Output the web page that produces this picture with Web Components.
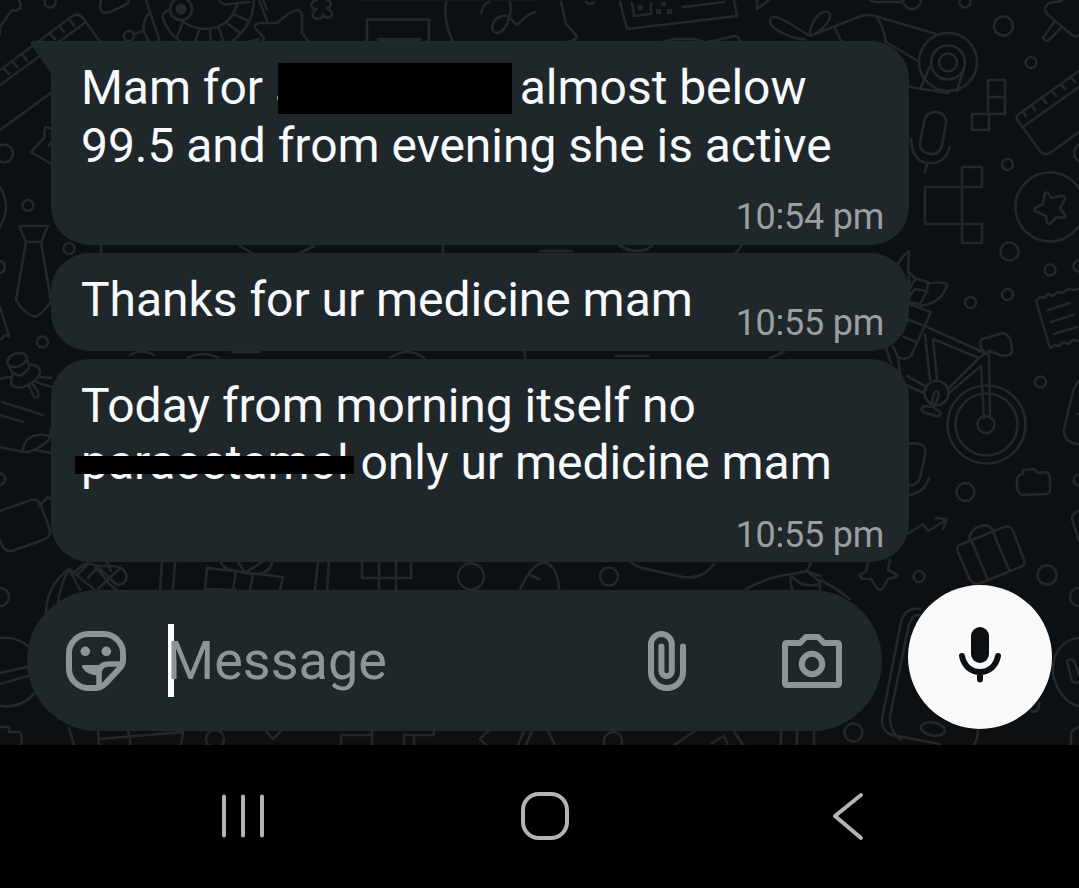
<!DOCTYPE html>
<html lang="en">
<head>
<meta charset="utf-8">
<title>Chat</title>
<style>
	body {
		margin: 0;
		background: #000;
		font-family: Roboto, "Liberation Sans", sans-serif;
	}
</style>
</head>
<body>
<chat-screen>
	<chat-bubble tail time="10:54 pm">Mam for <redacted-block></redacted-block> almost below<br>99.5 and from evening she is active</chat-bubble>
	<chat-bubble compact time="10:55 pm">Thanks for ur medicine mam</chat-bubble>
	<chat-bubble time="10:55 pm">Today from morning itself no<br><struck-word>paracetamol</struck-word> only ur medicine mam</chat-bubble>
	<message-composer slot="composer" placeholder="Message"></message-composer>
	<system-nav slot="nav"></system-nav>
</chat-screen>

<script>
/** Doodle pattern drawn behind the conversation. */
class ChatWallpaper extends HTMLElement {
	constructor() {
		super();
		this.attachShadow({ mode: "open" }).innerHTML = `
			<style>
				:host {
					display: block;
					background: #0b1014;
				}

				svg {
					display: block;
					fill: none;
					stroke: #22282c;
					stroke-width: 2.6;
					stroke-linecap: round;
					stroke-linejoin: round;
				}

				.solid {
					fill: #22282c;
					stroke: none;
				}
			</style>
			<svg width="1079" height="745" viewBox="0 0 1079 745" aria-hidden="true">
				<!-- top edge, left half -->
				<path d="M0 34V27L12 10Q19 12 21 6L19 0"/>
				<circle cx="50" cy="2" r="5.5"/>
				<path d="M101 0L100 8Q102 15 110 12L125 5Q129 3 129 0"/>
				<path d="M0 70L71 17Q78 12 83 18L100 42M0 85L86 22M0 130L52 92M4 69l5 5M13 62l4 5M23 55l4 6M50 34l5 5M60 27l4 5M70 20l4 6"/>
				<circle cx="129" cy="36" r="5"/>
				<path d="M134 34L143 31M150 12Q137 27 150 42M146 0L160 42"/>
				<circle cx="181" cy="9" r="11"/>
				<circle class="solid" cx="181" cy="9" r="5.5"/>
				<path d="M169 10Q161 13 163 19Q168 33 181 42M182 21Q193 29 207 29Q230 27 237 5M219 0Q223 6 230 4L250 2M254 0Q253 27 231 42M183 22L177 37M199 30L195 42M210 30L211 42M219 28L223 40M227 23L240 33M233 14L249 21"/>
				<path d="M259 0L268 23M263 0L267 10M262 41L264 38L255 28Q254 23 261 23H277L288 14Q300 6 302 15V33L309 42M248 42L259 39"/>
				<path d="M313 2C308 6 314 10 317 9C311 12 311 19 319 19C322 19 323 15 323 14C325 19 332 19 332 14C332 10 327 9 327 8C333 6 331 0 326 0M317 0Q313 0 313 2"/>
				<path d="M367 42V19.500H429V42"/>
				<path class="solid" d="M376 38H421V42H379Z"/>
				<path d="M446 2Q443 21 453 42M481 13Q483 4 489 2M510 2C513 17 505 31 498 33C489 33 491 19 502 16C512 14 513 24 517 25C520 22 527 14 535 12"/>
				<!-- top edge, right half -->
				<path d="M360 0H540" stroke-width="1" opacity=".6"/>
				<path d="M561 2L566 24L577 36Q577 41 566 42M586 2Q590 6 594 2"/>
				<path d="M620 2L627 29L737 16L734 0M632 3L634 16L651 14V3M683 7L724 2"/>
				<path class="solid" d="M638 5h5v5h-5zM656 9h5v5h-5zM661 2h5v4h-5zM667 9h5v5h-5z"/>
				<path d="M708 42L735 36Q739 36 740 42M757 0V9L769 0M662 42L674 39H695L703 42"/>
				<path d="M805 39C793 40 768 28 770 20C773 10 794 27 810 36C809 24 820 9 828 12C836 17 820 33 810 36L861 16Q866 14 875 16L936 34M835 28L842 43M875 16Q882 21 886 42L918 61M909 87L948 93"/>
				<path d="M870 0Q874 3 880 2H902"/>
				<circle cx="912" cy="0" r="9"/>
				<circle cx="965" cy="2" r="5.500"/>
				<circle cx="1003.500" cy="26" r="9.500"/>
				<circle cx="1031" cy="62.500" r="5.500"/>
				<path d="M1062 1L1050 3Q1042 7 1047 14L1072 35Q1076 38 1079 35M1054 22L1043 38Q1045 43 1050 39L1061 28"/>
				<circle cx="948" cy="62" r="29"/>
				<circle cx="948" cy="62.500" r="17"/>
				<circle cx="948" cy="62.500" r="9"/>
				<path d="M930 66L921 87M964 68L957 91"/>
				<!-- microphone, blocks and ruler -->
				<path d="M924 122Q926 112 935 112Q947 113 946 124L942 145Q940 155 930 154Q919 152 920 143ZM911 139C912 154 918 163 929 163Q945 164 950 147M927 164L925 172"/>
				<path d="M988 80H1005V114H988ZM988 97H1005M972 114H989V130H972ZM962 167H982V187H962ZM925 187H962V224H925ZM962 187V224M962 224H982V243H962Z"/>
				<path d="M1079 71L1019 114Q1015 117 1018 121L1040 151Q1044 156 1050 153L1079 132M1024 126L1079 87M1022 111l4 5M1031 105l4 5M1042 97l4 6M1052 91l4 5M1061 84l4 5M1071 77l4 5"/>
				<circle cx="1083" cy="153" r="9"/>
				<circle cx="1007.500" cy="164.500" r="5.500"/>
				<circle cx="1050" cy="207" r="34.500"/>
				<path d="M1045 193Q1048 191 1051 198L1061 196Q1067 196 1064 201L1060 208L1065 215Q1067 219 1057 217L1050 224Q1047 226 1046 216L1035 211Q1032 209 1043 204Z"/>
				<circle cx="1009.500" cy="251.500" r="9"/>
				<circle cx="1050" cy="270" r="5.500"/>
				<circle cx="1079" cy="266" r="5.500"/>
				<circle cx="1007.500" cy="294.500" r="5.500"/>
				<circle cx="970.500" cy="302.500" r="5.500"/>
				<path d="M1036 301l4-4 4 1 4-4 5 2 5-4 5 1 5-4 6 1 4-1M1036 301L1050 348l5-3 4 1 4-4 5 2 5-4 6 1M1048 310L1070 303M1051 322L1073 315M1054 334L1077 327"/>
				<!-- flowers and bicycle -->
				<path d="M898 264Q904 254 909 251L908 272M909 272L916 279L928 282L927 291L920 304L909 302V272M927 284Q938 281 947 284Q943 303 920 306M915 279L909 290M927 291L915 289L909 297M909 304L931 312L911 356Q905 361 898 357L893 346M909 320L925 326M904 337L916 342M886 348L891 363M898 357L900 374"/>
				<path d="M925 326L989 355Q981 352 980 343Q980 339 986 338L1003 333Q1012 335 1012 352Q1010 357 1000 355L989 351L979 358M933 339L979 358L948 389M925 334L930 380M933 339L937 380M907 376L925 386M906 385L924 393M989 355L990 418M981 366L984 418M981 366L949 393"/>
				<circle cx="936.500" cy="393" r="12"/>
				<path d="M934 393Q939 389 939 395L934 408L940 412Q942 417 936 416L923 412Q919 408 925 406L931 407Z"/>
				<circle cx="986.500" cy="424.500" r="39"/>
				<circle cx="986.500" cy="424.500" r="31"/>
				<circle cx="986" cy="424.500" r="8.500"/>
				<circle cx="1040.500" cy="382" r="5.500"/>
				<path d="M1079 381Q1076 383 1073 392L1064 429Q1063 443 1079 444M1077 414h2"/>
				<path d="M907 444Q928 440 925 456L920 478Q917 486 906 486M929 478Q924 494 906 495"/>
				<path d="M1017 480Q1018 474 1023 474V470L1035 469L1037 473L1046 472Q1050 473 1050 480V490Q1050 494 1045 494L1023 495Q1018 494 1017 488Z"/>
				<circle cx="965.500" cy="492" r="9"/>
				<circle cx="1079" cy="480" r="5.500"/>
				<!-- suitcase, arrow, star, phone -->
				<path d="M909 533L923 524L928 531L946 520M936 518L947 519L943 529"/>
				<path d="M958 552Q955 546 962 544L1004 527Q1010 525 1013 531L1024 560Q1026 565 1020 567L981 583Q973 586 969 578ZM969 540C969 526 991 519 994 533M972 542L987 578M993 532L1009 570"/>
				<circle cx="1047" cy="575" r="9.500"/>
				<circle cx="919" cy="576.500" r="5.500"/>
				<circle cx="1079" cy="597" r="9"/>
				<path d="M1079 511Q1070 513 1073 522L1079 541M868 562L866 571L860 575Q860 579 865 579H871L877 588Q881 593 884 586L888 579Q900 577 896 574L888 570L890 559"/>
				<path d="M920 609Q905 607 901 622L882 719Q881 731 892 735L940 744M920 615Q911 614 908 629L890 716Q889 731 901 740M974 744Q978 739 978 729"/>
				<ellipse cx="933" cy="729" rx="12" ry="6.500" transform="rotate(10 933 729)"/>
				<path d="M1079 638C1058 640 1047 663 1056 684Q1064 703 1079 706M1067 661Q1072 657 1075 663L1079 675M1067 661L1072 681Q1074 684 1079 682M1031 711Q1039 714 1039 703M1071 745V735Q1071 729 1079 727"/>
				<circle cx="853.500" cy="732.500" r="9"/>
				<!-- left edge -->
				<circle cx="4" cy="153.500" r="9"/>
				<path d="M53 129L45 127L44 138L31 152L53 165M49 145L53 141M0 187Q12 206 0 227"/>
				<circle cx="28" cy="205.500" r="5.500"/>
				<circle cx="-1" cy="267" r="6"/>
				<path d="M19 226H48L41 242H26ZM26 242L16 300Q23 313 35 317Q45 312 51 301L41 242M0 307L9 336Q3 334 2 339H0"/>
				<circle cx="69" cy="248.500" r="5.500"/>
				<circle cx="42.500" cy="342" r="5.500"/>
				<ellipse cx="17" cy="360" rx="10" ry="6.500" transform="rotate(-20 17 360)"/>
				<path d="M8 364L13 374Q9 382 13 386Q21 391 34 381Q43 374 38 367Q35 364 29 365L26 357M14 373Q20 380 29 368M28 384L34 397Q40 399 38 392L32 383M0 379Q5 377 11 377M36 382L52 387M39 377L52 378M2 402L43 415M0 415L23 422M0 447L23 452Q34 453 49 440L52 427M23 452C23 438 34 432 49 436M35 450L52 453"/>
				<circle cx="-1" cy="479" r="6"/>
				<path d="M0 511L31 500Q38 498 41 506L50 530Q51 537 43 540L12 551Q5 552 2 545L0 540M39 506L48 497L52 500"/>
				<circle cx="0" cy="597" r="9"/>
				<path d="M0 638Q17 636 29 647M0 706Q20 709 34 694M0 673L27 667M0 684L31 675M0 727H9V732H19Q23 735 21 745"/>
				<!-- strip above the composer -->
				<path d="M46 612Q47 585 69 569L80 590M69 569Q60 586 58 602M69 569L94 589M73 574Q87 558 95 566L110 585L117 590M88 578L99 566H115C132 569 128 588 116 584L96 565M88 564L78 574M98 589L120 568M107 562L111 571M162 562L160 590M175 562L173 590M207 568L283 577L280 590M207 568L205 590M206 589L236 590M236 572L233 590M253 574L250 590M221 562Q223 570 238 571L245 573L262 562M238 562L245 573Q270 577 272 562M318 562L315 590M329 562L327 590M362 562V578H411V562M379 562V590M396 562V590M520 590Q532 561 546 563Q558 567 559 590M530 575L539 579"/>
				<circle cx="471" cy="576.500" r="13"/>
				<circle cx="609" cy="576.500" r="9"/>
				<path d="M631 562Q637 568 651 570L683 577Q702 580 714 564M746 589Q770 576 792 574L807 571L820 582V590M792 577Q804 589 820 584M790 578L792 590M807 571L811 562M820 580Q833 586 850 599M807 571L820 576"/>
				<!-- strips between the bubbles -->
				<path d="M101 245V253M240 246l12 7M300 253l14-7M443 245v8M540 251h32M620 246q18 10 32 0M742 245l-6 8M130 355q12-7 24 0M232 352h28M390 358q18-12 34 0M525 351v8M616 356h32M770 358l14-6M188 358q15-8 30 0"/>
				<!-- strip under the composer -->
				<path d="M69 728L74 745M98 731L99 745M128 731L130 739M100 739L183 732L181 745M130 739V745M266 731L273 739L281 731M341 745V735H372V745M372 735V731M404 745V735H434V731M414 735V745M488 731L480 739L486 745M524 731L518 745M532 731L526 745M548 731L555 745M674 745L695 731M712 743L724 736L728 745M734 731L743 745M781 731V745M797 731V745M814 731V745"/>
				<circle cx="215" cy="739" r="9"/>
				<circle cx="613" cy="741" r="9"/>
			</svg>
		`;
	}
}

/** Full screen layout: wallpaper, messages, composer and navigation bar. */
class ChatScreen extends HTMLElement {
	constructor() {
		super();
		this.attachShadow({ mode: "open" }).innerHTML = `
			<style>
				:host {
					display: flex;
					flex-direction: column;
					width: 1079px;
					height: 888px;
					overflow: hidden;
				}

				main {
					position: relative;
					flex: 0 0 745px;
					box-sizing: border-box;
					padding: 41px 27px 0;
					overflow: hidden;
				}

				chat-wallpaper {
					position: absolute;
					inset: 0;
				}

				.messages {
					position: relative;
					display: flex;
					flex-direction: column;
					gap: 8px;
					width: 858px;
					margin-left: 24px;
				}

				.composer {
					position: relative;
					margin-top: 28px;
				}
			</style>
			<main>
				<chat-wallpaper></chat-wallpaper>
				<div class="messages"><slot></slot></div>
				<div class="composer"><slot name="composer"></slot></div>
			</main>
			<slot name="nav"></slot>
		`;
	}
}

/**
 * A received message.
 *
 * @attribute {string} time - Time shown in the lower right corner.
 * @attribute {boolean} tail - Draws the pointer at the upper left corner.
 * @attribute {boolean} compact - Keeps the time beside a single line of text.
 */
class ChatBubble extends HTMLElement {
	connectedCallback() {
		if (this.shadowRoot) return;

		this.attachShadow({ mode: "open" }).innerHTML = `
			<style>
				:host {
					position: relative;
					display: flex;
					flex-direction: column;
					box-sizing: border-box;
					height: 203.500px;
					padding: 18px 25px 0 30px;
					border-radius: 38px;
					background: #20272a;
					color: #f6fafc;
					font-size: 48px;
					line-height: 57.500px;
					letter-spacing: -0.04px;
					white-space: nowrap;
				}

				:host([tail]) {
					border-top-left-radius: 0;
				}

				:host([compact]) {
					flex-direction: row;
					justify-content: space-between;
					height: 98px;
				}

				.tail {
					position: absolute;
					top: 0;
					left: -21px;
					fill: #20272a;
				}

				:host(:not([tail])) .tail {
					display: none;
				}

				time {
					align-self: flex-end;
					margin-top: 22px;
					color: #9a9fa1;
					font-size: 36px;
					letter-spacing: -0.25px;
					line-height: 42px;
				}

				:host([compact]) time {
					margin: 0 0 7px;
				}
			</style>
			<svg class="tail" width="22" height="34" viewBox="0 0 22 34"><path d="M3 0H22V34L2 5Q-1 0 3 0Z"/></svg>
			<div class="text"><slot></slot></div>
			<time></time>
		`;
		this.shadowRoot.querySelector("time").textContent = this.getAttribute("time");
	}
}

/** Black box that covers a name. */
class RedactedBlock extends HTMLElement {
	constructor() {
		super();
		this.attachShadow({ mode: "open" }).innerHTML = `
			<style>
				:host {
					position: relative;
					display: inline-block;
					width: 234px;
					height: 51px;
					margin: -10px -4px -10px 3px;
					vertical-align: 0;
					background: #000;
				}

				i {
					position: absolute;
					left: -1px;
					top: 33px;
					width: 1px;
					height: 4px;
					background: #8d9294;
				}
			</style>
			<i></i>
		`;
	}
}

/** Word with a thick marker line over it. */
class StruckWord extends HTMLElement {
	constructor() {
		super();
		this.attachShadow({ mode: "open" }).innerHTML = `
			<style>
				:host {
					position: relative;
					display: inline-block;
				}

				:host::after {
					content: "";
					position: absolute;
					top: 22px;
					left: -6px;
					width: 279px;
					height: 18px;
					background: #000;
				}
			</style>
			<slot></slot>
		`;
	}
}

/**
 * Message input with its icons and the voice button.
 *
 * @attribute {string} placeholder - Hint shown in the empty field.
 */
class MessageComposer extends HTMLElement {
	connectedCallback() {
		if (this.shadowRoot) return;

		this.attachShadow({ mode: "open" }).innerHTML = `
			<style>
				:host {
					display: flex;
					align-items: flex-start;
					justify-content: space-between;
				}

				.field {
					display: flex;
					align-items: center;
					box-sizing: border-box;
					width: 855px;
					height: 141px;
					padding: 0 40px 0 39px;
					border-radius: 71px;
					background: #20272a;
				}

				svg {
					flex: none;
					fill: none;
					stroke: #8d9598;
					stroke-width: 6;
					stroke-linejoin: round;
					stroke-linecap: round;
				}

				.solid {
					fill: #8d9598;
					stroke: none;
				}

				.caret {
					width: 6px;
					height: 73px;
					margin-left: 42px;
					background: #fbfdff;
				}

				.hint {
					position: relative;
					flex: 1;
					margin-left: -7px;
					color: #8d9598;
					font-size: 54px;
					line-height: 64px;
				}

				.camera {
					margin-left: 96px;
				}

				button {
					display: block;
					width: 144px;
					height: 144px;
					margin: -5px 0 0;
					padding: 0;
					border: 0;
					border-radius: 50%;
					background: #fafafa;
				}

				button svg {
					display: block;
					stroke: #0b1014;
				}

				button rect {
					fill: #0b1014;
					stroke: none;
				}
			</style>
			<div class="field">
				<svg width="60" height="60" viewBox="0 0 60 60">
					<path d="M22 3H38C48 3 57 12 57 22V29Q57 34 53 38L40 52Q35 57 30 57H22C12 57 3 48 3 38V22C3 12 12 3 22 3Z"/>
					<path d="M55 33H43Q33 33 33 43V55" stroke-width="5.500"/>
					<circle class="solid" cx="19.300" cy="20.300" r="4.800"/>
					<circle class="solid" cx="40.300" cy="20.300" r="4.800"/>
					<path class="solid" d="M17.500 34H35V44.500H32Q20 44 16 36Q15.500 34 17.500 34Z"/>
				</svg>
				<span class="caret"></span>
				<span class="hint"></span>
				<svg width="38" height="60" viewBox="0 0 38 60">
					<path d="M35 15.500V41a16 16 0 0 1-32 0V13.400a10.400 10.400 0 0 1 20.800 0V40a5.200 5.200 0 0 1-10.400 0V15.500"/>
				</svg>
				<svg class="camera" width="60" height="54" viewBox="0 0 60 54">
					<path d="M5 9H18L24 3H36L42 9H55Q57 9 57 11V49Q57 51 55 51H5Q3 51 3 49V11Q3 9 5 9Z"/>
					<circle cx="30" cy="30" r="10.200"/>
				</svg>
			</div>
			<button aria-label="Voice message">
				<svg width="144" height="144" viewBox="0 0 144 144">
					<rect x="63" y="42" width="18" height="36" rx="9"/>
					<path d="M54 71C56 81 63 87 72 87S88 81 90 71M72 87V94.500"/>
				</svg>
			</button>
		`;
		this.shadowRoot.querySelector(".hint").textContent = this.getAttribute("placeholder");
	}
}

/** System navigation bar: recents, home, back. */
class SystemNav extends HTMLElement {
	constructor() {
		super();
		this.attachShadow({ mode: "open" }).innerHTML = `
			<style>
				:host {
					display: flex;
					align-items: center;
					box-sizing: border-box;
					height: 143px;
					padding: 0 0 2px 219px;
					background: #000;
				}

				svg {
					flex: none;
					fill: none;
					stroke: #b4b4b4;
					stroke-width: 4;
					stroke-linecap: round;
					stroke-linejoin: round;
				}

				.home {
					margin: 0 262px 0 253px;
				}
			</style>
			<svg width="48" height="48" viewBox="0 0 48 48"><path d="M5 4.500V43.500M24 4.500V43.500M43 4.500V43.500"/></svg>
			<svg class="home" width="50" height="50" viewBox="0 0 50 50"><rect x="3" y="3" width="44" height="44" rx="16"/></svg>
			<svg width="34" height="50" viewBox="0 0 34 50"><path d="M29 4L3 25L29 47"/></svg>
		`;
	}
}

customElements.define("chat-wallpaper", ChatWallpaper);
customElements.define("chat-screen", ChatScreen);
customElements.define("chat-bubble", ChatBubble);
customElements.define("redacted-block", RedactedBlock);
customElements.define("struck-word", StruckWord);
customElements.define("message-composer", MessageComposer);
customElements.define("system-nav", SystemNav);
</script>
</body>
</html>
